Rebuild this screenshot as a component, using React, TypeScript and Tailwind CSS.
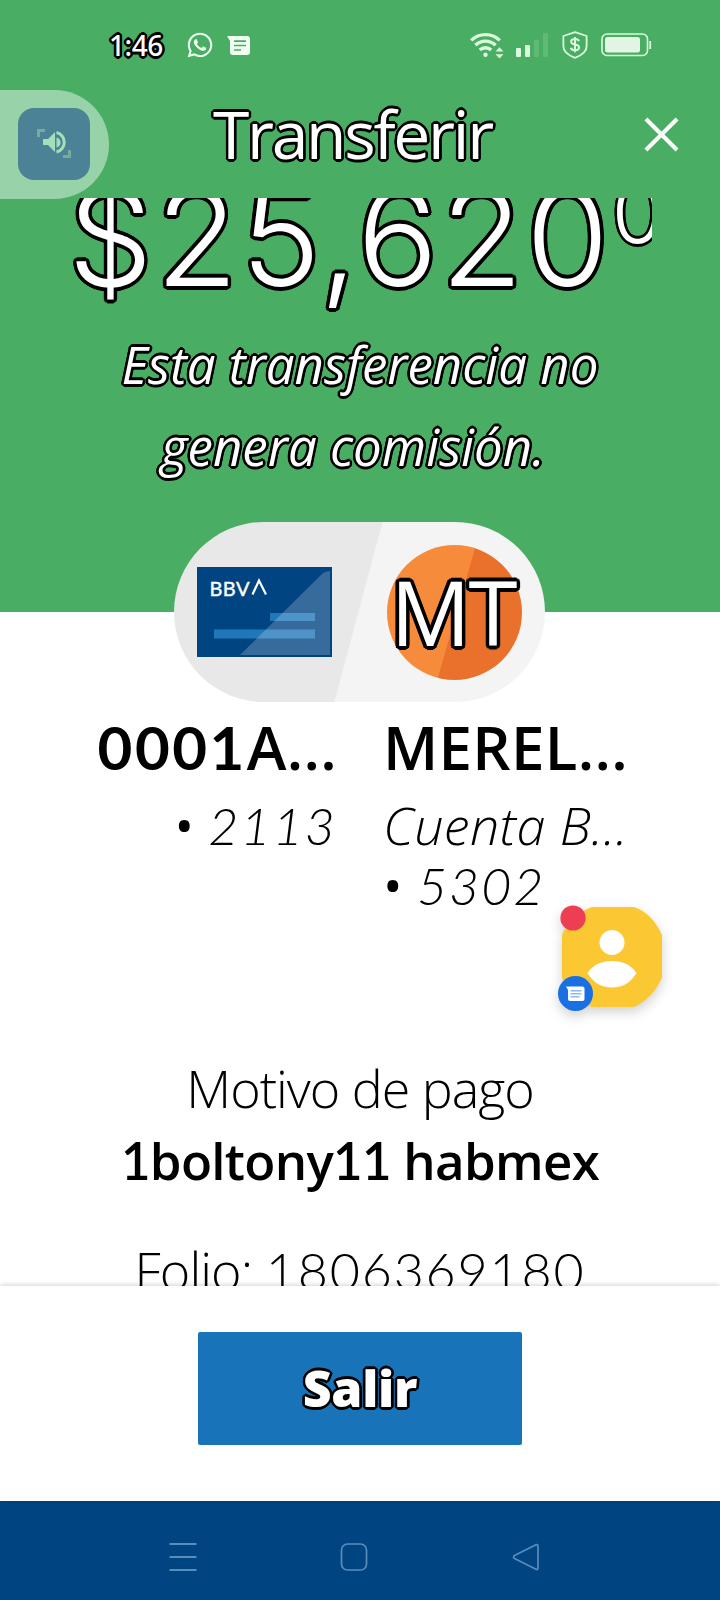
import type { ReactNode } from "react";
import { FaWhatsapp } from "react-icons/fa";

// round black outline behind white text, in two thicknesses
const OUTLINE =
  "text-white [text-shadow:2.6px_0_#000,2.25px_1.3px_#000,1.3px_2.25px_#000,0_2.6px_#000,-1.3px_2.25px_#000,-2.25px_1.3px_#000,-2.6px_0_#000,-2.25px_-1.3px_#000,-1.3px_-2.25px_#000,0_-2.6px_#000,1.3px_-2.25px_#000,2.25px_-1.3px_#000]";
const OUTLINE_THICK =
  "text-white [text-shadow:3.6px_0_#000,3.1px_1.8px_#000,1.8px_3.1px_#000,0_3.6px_#000,-1.8px_3.1px_#000,-3.1px_1.8px_#000,-3.6px_0_#000,-3.1px_-1.8px_#000,-1.8px_-3.1px_#000,0_-3.6px_#000,1.8px_-3.1px_#000,3.1px_-1.8px_#000]";

export default function App() {
  return (
    <div className="relative flex h-[1600px] w-[720px] flex-col overflow-hidden bg-white font-['Open_Sans',sans-serif] text-black">
      <div className="bg-[#49ae63]">
        <StatusBar />
        <Header />
      </div>

      <main className="h-[1088px] overflow-hidden">
        <Hero />
        <AccountsPill />
        <div className="mt-[15px] flex gap-[46px] whitespace-nowrap">
          <Account digits="0001" rest="A..." number="2113" align="right" />
          <Account rest="MEREL..." type="Cuenta B..." number="5302" align="left" />
        </div>
        <div className="mt-[137px] text-center whitespace-nowrap">
          <div className="text-[52px] leading-[72px] font-light tracking-[-1px]">Motivo de pago</div>
          <div className="text-[51px] leading-[72px] font-semibold tracking-[-0.7px]">
            <Digits>1</Digits>boltony<Digits>11</Digits> habmex
          </div>
          <div className="mt-[43px] text-[52px] leading-[60px] font-light tracking-[-0.9px]">
            Folio: <span className="ml-px tracking-[1.8px]"><Digits>1806369180</Digits></span>
          </div>
        </div>
      </main>

      <footer className="relative flex h-[215px] flex-col items-center bg-white pt-[46px] shadow-[0_-1px_5px_rgba(0,0,0,0.18)]">
        <button
          type="button"
          className={`h-[113px] w-[324px] rounded-[2px] bg-[#1973b8] text-[50px] font-extrabold tracking-[-0.3px] ${OUTLINE}`}
        >
          Salir
        </button>
      </footer>

      <NavBar />
      <SoundBubble />
      <ChatBubble />
    </div>
  );
}

function Digits({ children }: { children: ReactNode }) {
  return <span className="font-['Lato',sans-serif]">{children}</span>;
}

function StatusBar() {
  return (
    <div className="flex h-[68px] items-center pt-[22px] pl-[109px]">
      <span className={`w-[77px] font-['Noto_Sans',sans-serif] text-[28px] leading-[28px] font-medium tracking-[-0.5px] ${OUTLINE}`}>
        1:46
      </span>
      <FaWhatsapp className="size-[28px] text-[#effff0]" />
      <svg className="ml-[13px]" width="23" height="19" viewBox="0 0 23 19">
        <path d="M0 0h20a3 3 0 0 1 3 3v13a3 3 0 0 1-3 3H6a3 3 0 0 1-3-3V5z" fill="#effff0" />
        <path d="M7 5.2h12M7 9.5h12M7 14h7" stroke="#49ae63" strokeWidth="1.7" />
      </svg>

      <svg className="ml-[220px]" width="34" height="27" viewBox="0 0 34 27" fill="none" stroke="#d9fbdc" strokeWidth="3.4">
        <path d="M1.2 8.4a20.5 20.5 0 0 1 28.6 0M5.5 13.2a14.2 14.2 0 0 1 20 0M9.8 18a8.2 8.2 0 0 1 11.4 0" />
        <circle cx="15.5" cy="22.8" r="2.2" fill="#d9fbdc" stroke="none" />
        <path d="M29.5 15.2l4 4.4h-8zM29.5 26.6l4-4.4h-8z" fill="#d9fbdc" stroke="none" />
      </svg>
      <svg className="ml-[12px]" width="33" height="24" viewBox="0 0 33 24">
        <rect x="0" y="15" width="5" height="9" rx="1" fill="#d9fbdc" />
        <rect x="9" y="12" width="5" height="12" rx="1" fill="#d9fbdc" />
        <rect x="18" y="7" width="5" height="17" rx="1" fill="#5fba76" />
        <rect x="27" y="0" width="5" height="24" rx="1" fill="#5fba76" />
      </svg>
      <svg className="ml-[13px]" width="26" height="28" viewBox="0 0 26 28" fill="none" stroke="#d9fbdc">
        <path d="M13 1.1 24.6 5v10.3c0 5.2-4.6 9-11.6 11.5C6 24.3 1.4 20.5 1.4 15.3V5z" strokeWidth="1.8" strokeLinejoin="round" />
        <path d="M17 10.3c-.4-1.5-1.9-2.3-4-2.3-2.3 0-3.9 1-3.9 2.7 0 3.9 8 1.7 8 5.6 0 1.8-1.7 2.9-4.1 2.9-2.3 0-3.9-.9-4.2-2.5M13 6v15.2" strokeWidth="2" />
      </svg>
      <svg className="ml-[13px]" width="51" height="24" viewBox="0 0 51 24" fill="none">
        <rect x="1" y="1" width="45.5" height="21.5" rx="5" stroke="#d9fbdc" strokeWidth="1.6" />
        <rect x="4" y="4" width="35" height="15.5" rx="2.5" fill="#e2f5e5" />
        <path d="M49.2 8v8" stroke="#d9fbdc" strokeWidth="1.8" />
      </svg>
    </div>
  );
}

function Header() {
  return (
    <div className="flex h-[130px] items-center justify-between pr-[41px] pl-[213px]">
      <h1 className={`text-[66px] leading-[90px] font-[370] tracking-[-2.3px] whitespace-nowrap ${OUTLINE}`}>
        Transferir
      </h1>
      <svg className="mt-[3px]" width="35" height="35" viewBox="0 0 36 36" stroke="#fff" strokeWidth="4.2">
        <path d="M2 2l32 32M34 2 2 34" />
      </svg>
    </div>
  );
}

function Hero() {
  return (
    <section className="flow-root h-[414px] bg-[#49ae63] px-[68px]">
      <div className="flow-root h-[85px] overflow-x-clip">
        <div className={`-mt-[10px] flex font-['Inter',sans-serif] font-light whitespace-nowrap ${OUTLINE_THICK}`}>
          <span className="text-[134px] leading-[98px] tracking-[3px]">$25,620</span>
          <span className={`text-[84px] leading-[50px] ${OUTLINE}`}>00</span>
        </div>
      </div>
      <p className={`mt-[40px] text-center text-[51px] leading-[82px] whitespace-nowrap italic ${OUTLINE}`}>
        Esta transferencia no
        <br />
        <span className="pr-[14px]">genera comisión.</span>
      </p>
    </section>
  );
}

function AccountsPill() {
  return (
    <div className="relative -mt-[90px] ml-[174px] flex h-[180px] w-[371px] items-center justify-between overflow-hidden rounded-full bg-[linear-gradient(105deg,#e8e8e8_0_49.6%,#f4f4f4_49.9%)] pr-[23px] pl-[23px]">
      <svg width="135" height="90" viewBox="0 0 135 90" fill="none">
        <path d="M0 0h135v90H0z" fill="#004481" />
        <path d="M17 62.5h101v9H17zM73 46h45v8H73z" fill="#2078bb" />
        <path d="M133 4v84H43l83-82q3-2 7-2z" fill="#fff" fillOpacity=".21" />
        <text x="12.5" y="28.5" fill="#fff" stroke="#fff" strokeWidth=".4" fontFamily="Lato, sans-serif" fontSize="20" letterSpacing="0.4">
          BBV
        </text>
        <path d="M55.5 27.5 62 13.5l7 14" stroke="#fff" strokeWidth="2.2" />
      </svg>
      <div className="flex size-[135px] items-center justify-center rounded-full bg-[linear-gradient(106deg,#f78b3c_0_51%,#e9712b_51.4%)]">
        <span className={`mr-[3px] text-[89px] leading-[100px] tracking-[-2px] ${OUTLINE_THICK}`}>MT</span>
      </div>
    </div>
  );
}

function Account({
  digits,
  rest,
  type,
  number,
  align,
}: {
  digits?: string;
  rest: string;
  type?: string;
  number: string;
  align: "left" | "right";
}) {
  return (
    <div className={align === "right" ? "w-[337px] text-right" : "w-[336px] text-left"}>
      <div className="mb-[18px] text-[60px] leading-[60px] font-semibold tracking-[0.3px]">
        {digits && <span className="font-['Lato',sans-serif] font-bold tracking-[2.5px]">{digits}</span>}
        {rest}
      </div>
      <div className="text-[52px] leading-[60px] font-light tracking-[0.4px] italic">
        {type && <div>{type}</div>}
        <div>
          <span className="font-normal not-italic">•</span>{" "}
          <span className="tracking-[2px]"><Digits>{number}</Digits></span>
        </div>
      </div>
    </div>
  );
}

function NavBar() {
  return (
    <nav className="flex h-[99px] items-center bg-[#004481] pt-[12px] pl-[168px]">
      <svg width="30" height="30" viewBox="0 0 30 30" stroke="#5b8dbb" strokeWidth="2">
        <path d="M1.5 2h27M1.5 15h27M1.5 28h27" />
      </svg>
      <svg className="ml-[141px]" width="30" height="30" viewBox="0 0 30 30" fill="none" stroke="#5b8dbb" strokeWidth="1.7">
        <rect x="2.5" y="2" width="25" height="26" rx="6" />
      </svg>
      <svg className="ml-[142px]" width="30" height="30" viewBox="0 0 30 30" fill="none" stroke="#5b8dbb" strokeWidth="1.7" strokeLinejoin="round">
        <path d="M25.5 2.5 3.5 13.5q-2 1.5 0 3L25.5 27.5q1.5 0 1.5-2V4.5q0-2-1.5-2z" />
      </svg>
    </nav>
  );
}

function SoundBubble() {
  return (
    <div className="absolute top-[90px] left-0 h-[109px] w-[109px] rounded-r-full bg-[#98d2a8] pt-[18px] pl-[18px]">
      <div className="flex size-[72px] items-center justify-center rounded-[16px] bg-[#4b8295]">
        <svg width="34" height="30" viewBox="0 0 34 30" fill="none">
          <path d="M1.5 8V1.5H8M26 27.5h6.5V21" stroke="#77ac9c" strokeWidth="3" />
          <path d="M6 10h5l7-7v20l-7-7H6z" fill="#a5dfb9" />
          <path d="M19.5 8.5q4 1 4 5t-4 5z" fill="#a5dfb9" />
          <path d="M19.5 3.5a10 10 0 0 1 0 19.5" stroke="#a5dfb9" strokeWidth="3" />
        </svg>
      </div>
    </div>
  );
}

function ChatBubble() {
  return (
    <div className="absolute top-[900px] left-[550px]">
      <svg className="drop-shadow-[0_5px_6px_rgba(0,0,0,0.18)]" width="120" height="120" viewBox="0 0 120 120">
        <path d="M42 7h42q18 6 28 28v43q-10 21-28 29H42q-22-8-30-29V35Q20 15 42 7z" fill="#fbc834" />
        <circle cx="62" cy="42.5" r="12.5" fill="#fff" />
        <path d="M37.5 73q8-12 24.5-12t24.5 12Q78 87.5 62 87.5T37.5 73z" fill="#fff" />
        <circle cx="23" cy="18" r="12.6" fill="#ee3e54" />
        <circle cx="25.5" cy="93.5" r="17.5" fill="#1a6fe2" />
        <path d="M16 86.5h16.5q2 0 2 2v10.5q0 2-2 2H20q-2 0-2-2v-9z" fill="#fff" />
        <path d="M20.5 90.7h11M20.5 93.7h11M20.5 96.7h9" stroke="#8db8f2" strokeWidth="1.4" />
      </svg>
    </div>
  );
}
